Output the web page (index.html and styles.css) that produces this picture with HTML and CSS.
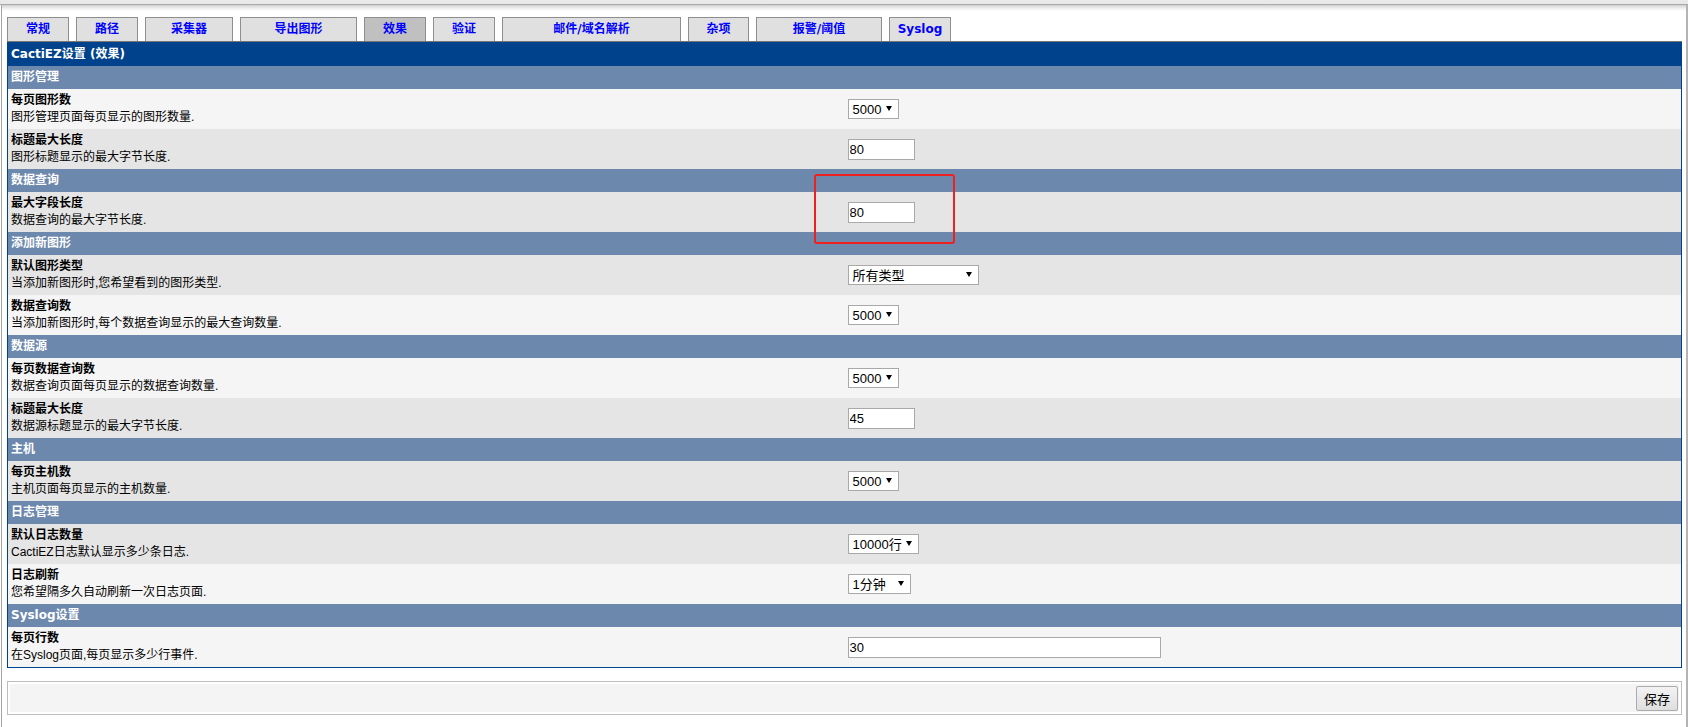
FILE: index.html
```html
<!DOCTYPE html>
<html lang="zh-CN">
<head>
<meta charset="utf-8">
<title>CactiEZ设置 (效果)</title>
<link rel="stylesheet" href="styles.css">
</head>
<body>
<div class="topbar"></div>
<div class="page">
  <div class="tabs">
    <a class="tab tab-general">常规</a>
    <a class="tab tab-path">路径</a>
    <a class="tab tab-poller">采集器</a>
    <a class="tab tab-export">导出图形</a>
    <a class="tab tab-visual active">效果</a>
    <a class="tab tab-auth">验证</a>
    <a class="tab tab-mail">邮件/域名解析</a>
    <a class="tab tab-misc">杂项</a>
    <a class="tab tab-alert">报警/阈值</a>
    <a class="tab tab-syslog">Syslog</a>
  </div>

  <div class="settings">
    <div class="header">CactiEZ设置 (效果)</div>

    <div class="section">图形管理</div>
    <div class="row light">
      <div class="label"><div class="title">每页图形数</div><div class="desc">图形管理页面每页显示的图形数量.</div></div>
      <div class="value"><span class="sel sel-num"><select><option>5000</option></select></span></div>
    </div>
    <div class="row dark">
      <div class="label"><div class="title">标题最大长度</div><div class="desc">图形标题显示的最大字节长度.</div></div>
      <div class="value"><input class="txt txt-short" type="text" value="80"></div>
    </div>

    <div class="section">数据查询</div>
    <div class="row dark">
      <div class="label"><div class="title">最大字段长度</div><div class="desc">数据查询的最大字节长度.</div></div>
      <div class="value"><input class="txt txt-short" type="text" value="80"></div>
    </div>

    <div class="section">添加新图形</div>
    <div class="row dark">
      <div class="label"><div class="title">默认图形类型</div><div class="desc">当添加新图形时,您希望看到的图形类型.</div></div>
      <div class="value"><span class="sel sel-type"><select><option>所有类型</option></select></span></div>
    </div>
    <div class="row light">
      <div class="label"><div class="title">数据查询数</div><div class="desc">当添加新图形时,每个数据查询显示的最大查询数量.</div></div>
      <div class="value"><span class="sel sel-num"><select><option>5000</option></select></span></div>
    </div>

    <div class="section">数据源</div>
    <div class="row light">
      <div class="label"><div class="title">每页数据查询数</div><div class="desc">数据查询页面每页显示的数据查询数量.</div></div>
      <div class="value"><span class="sel sel-num"><select><option>5000</option></select></span></div>
    </div>
    <div class="row dark">
      <div class="label"><div class="title">标题最大长度</div><div class="desc">数据源标题显示的最大字节长度.</div></div>
      <div class="value"><input class="txt txt-short" type="text" value="45"></div>
    </div>

    <div class="section">主机</div>
    <div class="row dark">
      <div class="label"><div class="title">每页主机数</div><div class="desc">主机页面每页显示的主机数量.</div></div>
      <div class="value"><span class="sel sel-num"><select><option>5000</option></select></span></div>
    </div>

    <div class="section">日志管理</div>
    <div class="row dark">
      <div class="label"><div class="title">默认日志数量</div><div class="desc">CactiEZ日志默认显示多少条日志.</div></div>
      <div class="value"><span class="sel sel-log"><select><option>10000行</option></select></span></div>
    </div>
    <div class="row light">
      <div class="label"><div class="title">日志刷新</div><div class="desc">您希望隔多久自动刷新一次日志页面.</div></div>
      <div class="value"><span class="sel sel-refresh"><select><option>1分钟</option></select></span></div>
    </div>

    <div class="section">Syslog设置</div>
    <div class="row light">
      <div class="label"><div class="title">每页行数</div><div class="desc">在Syslog页面,每页显示多少行事件.</div></div>
      <div class="value"><input class="txt txt-long" type="text" value="30"></div>
    </div>
  </div>

  <div class="savebar">
    <div class="savecell"><button class="save" type="button">保存</button></div>
  </div>
</div>
<div class="annot"></div>
</body>
</html>
```
FILE: styles.css
```css
* { box-sizing: border-box; }

html, body {
  margin: 0;
  padding: 0;
  background: #ffffff;
}

body {
  font-family: "Liberation Sans", "Noto Sans CJK SC", sans-serif;
  font-size: 12px;
  color: #000000;
  position: relative;
  height: 727px;
  overflow: hidden;
}

.topbar {
  height: 5px;
  background: linear-gradient(#e9e9e9 0, #e9e9e9 4px, #a8a8a8 4px, #a8a8a8 5px);
}

.page {
  margin-left: 1px;
  height: 722px;
  border-left: 1px solid #a4a4a4;
  border-right: 2px solid #b4b4b4;
  padding: 12px 4px 0 5px;
  background: linear-gradient(#d0d0d0 0, #ececec 3px, #ffffff 6px);
}

/* tabs */
.tabs {
  display: flex;
  gap: 7px;
  height: 25px;
  border-bottom: 1px solid #777777;
}

.tab {
  display: block;
  height: 24px;
  border: 1px solid #8e8e8e;
  border-bottom: 0;
  background: #e0e0e0;
  color: #0000ff;
  font-family: "DejaVu Sans", "Noto Sans CJK SC", sans-serif;
  font-weight: bold;
  font-size: 12px;
  line-height: 23px;
  text-align: center;
  text-decoration: none;
  white-space: nowrap;
}

.tab.active { background: #c0c0c0; }

.tab-general { width: 62px; }
.tab-path { width: 62px; }
.tab-poller { width: 88px; }
.tab-export { width: 117px; }
.tab-visual { width: 62px; }
.tab-auth { width: 62px; }
.tab-mail { width: 179px; }
.tab-misc { width: 61px; }
.tab-alert { width: 126px; }
.tab-syslog { width: 62px; }

/* settings table */
.settings {
  border: 1px solid #00438c;
  border-top: 0;
}

.header {
  height: 24px;
  line-height: 24px;
  padding-left: 3px;
  background: #00438c;
  color: #ffffff;
  font-family: "DejaVu Sans", "Noto Sans CJK SC", sans-serif;
  font-weight: bold;
  font-size: 12px;
}

.section {
  height: 23px;
  line-height: 23px;
  padding-left: 3px;
  background: #6d88ad;
  color: #ffffff;
  font-family: "DejaVu Sans", "Noto Sans CJK SC", sans-serif;
  font-weight: bold;
  font-size: 12px;
}

.row {
  display: flex;
  height: 40px;
}

.row.light { background: #f5f5f5; }
.row.dark { background: #e5e5e5; }

.label {
  width: 50%;
  padding: 3px;
  line-height: 17px;
  white-space: nowrap;
}

.title { font-weight: bold; }

.value {
  flex: 1;
  display: flex;
  align-items: center;
  padding-left: 3px;
}

/* form controls */
.sel {
  position: relative;
  display: inline-block;
  height: 20px;
}

.sel select {
  -webkit-appearance: none;
  appearance: none;
  width: 100%;
  height: 20px;
  margin: 0;
  padding: 0 0 0 4px;
  border: 1px solid #a9a9a9;
  border-radius: 0;
  background: #ffffff;
  color: #000000;
  font-family: "Liberation Sans", "Noto Sans CJK SC", sans-serif;
  font-size: 13px;
  outline: none;
}

.sel::after {
  content: "";
  position: absolute;
  right: 7px;
  top: 7px;
  border-left: 3px solid transparent;
  border-right: 3px solid transparent;
  border-top: 5px solid #000000;
  pointer-events: none;
}

.sel-num { width: 51px; }
.sel-type { width: 131px; }
.sel-log { width: 71px; }
.sel-refresh { width: 63px; }

.txt {
  height: 21px;
  margin: 0;
  padding: 0 1px;
  border: 1px solid #a9a9a9;
  border-radius: 0;
  background: #ffffff;
  color: #000000;
  font-family: "Liberation Sans", "Noto Sans CJK SC", sans-serif;
  font-size: 13px;
  outline: none;
}

.txt-short { width: 67px; }
.txt-long { width: 313px; }

/* save bar */
.savebar {
  margin-top: 13px;
  border: 1px solid #bdbdbd;
  padding: 2px;
}

.savecell {
  height: 28px;
  background: #f4f4f4;
  display: flex;
  justify-content: flex-end;
  align-items: center;
  padding-right: 1px;
}

.save {
  width: 42px;
  height: 25px;
  margin: 0;
  padding: 0;
  border: 1px solid #acacac;
  border-radius: 2px;
  background: linear-gradient(#f3f3f3, #dedede);
  color: #000000;
  font-family: "Noto Sans CJK SC", sans-serif;
  font-size: 13px;
}

/* red annotation overlay */
.annot {
  position: absolute;
  left: 814px;
  top: 174px;
  width: 141px;
  height: 70px;
  border: 2px solid #ee2020;
  border-radius: 3px;
  pointer-events: none;
}
```
